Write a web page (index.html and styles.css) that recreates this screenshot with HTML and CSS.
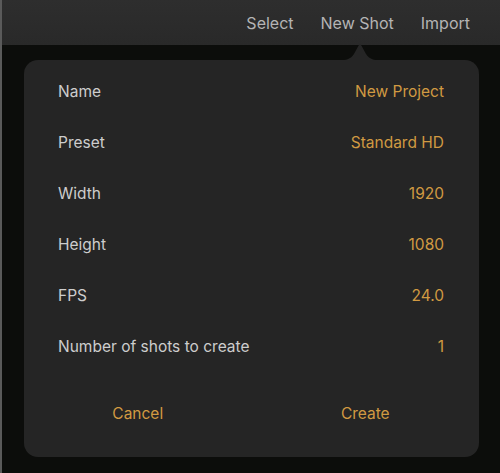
FILE: index.html
```html
<!DOCTYPE html>
<html lang="en">
<head>
<meta charset="utf-8">
<title>New Shot</title>
<link rel="stylesheet" href="styles.css">
</head>
<body>
<div class="screen">
  <header class="topbar">
    <span class="nav-item">Select</span>
    <span class="nav-item">New Shot</span>
    <span class="nav-item">Import</span>
  </header>
  <div class="popover">
    <svg class="arrow" width="36" height="16" viewBox="0 0 36 16" aria-hidden="true">
      <path d="M0,16 C6,16 9,14 12,10 L16.6,1.6 Q18,-0.4 19.4,1.6 L24,10 C27,14 30,16 36,16 Z" fill="#252525"/>
    </svg>
    <div class="rows">
      <div class="row"><span class="label">Name</span><span class="value">New Project</span></div>
      <div class="row"><span class="label">Preset</span><span class="value">Standard HD</span></div>
      <div class="row"><span class="label">Width</span><span class="value">1920</span></div>
      <div class="row"><span class="label">Height</span><span class="value">1080</span></div>
      <div class="row"><span class="label">FPS</span><span class="value">24.0</span></div>
      <div class="row"><span class="label">Number of shots to create</span><span class="value">1</span></div>
    </div>
    <div class="actions">
      <span class="action">Cancel</span>
      <span class="action">Create</span>
    </div>
  </div>
</div>
</body>
</html>
```
FILE: styles.css
```css
html, body {
  margin: 0;
  padding: 0;
  background: #0c0d0b;
}
body {
  font-family: Inter, Roboto, "Liberation Sans", sans-serif;
  width: 500px;
  height: 473px;
  overflow: hidden;
}
.screen {
  height: 473px;
  border-left: 2px solid #5a5a5a;
  box-sizing: border-box;
}
.topbar {
  height: 45px;
  background: linear-gradient(#2e2e2e, #292929);
  display: flex;
  justify-content: flex-end;
  align-items: center;
  gap: 27px;
  padding-right: 30px;
  box-sizing: border-box;
}
.nav-item {
  color: #b4b4b4;
  font-size: 16px;
  padding-top: 1px;
}
.popover {
  position: relative;
  margin: 15px 21px 0 22px;
  height: 397px;
  background: #252525;
  border-radius: 14px;
  padding: 6px 35px 0 34px;
  box-sizing: border-box;
}
.arrow {
  position: absolute;
  top: -16px;
  left: 318px;
  display: block;
}
.rows {
  display: flex;
  flex-direction: column;
}
.row {
  height: 51px;
  display: flex;
  justify-content: space-between;
  align-items: center;
  font-size: 15.5px;
}
.label {
  color: #cdcdcd;
}
.value {
  color: #d19a42;
}
.actions {
  display: flex;
  margin: 16px -35px 0 -34px;
  height: 50px;
  align-items: center;
}
.action {
  flex: 1;
  text-align: center;
  color: #d19a42;
  font-size: 15.5px;
}
```
